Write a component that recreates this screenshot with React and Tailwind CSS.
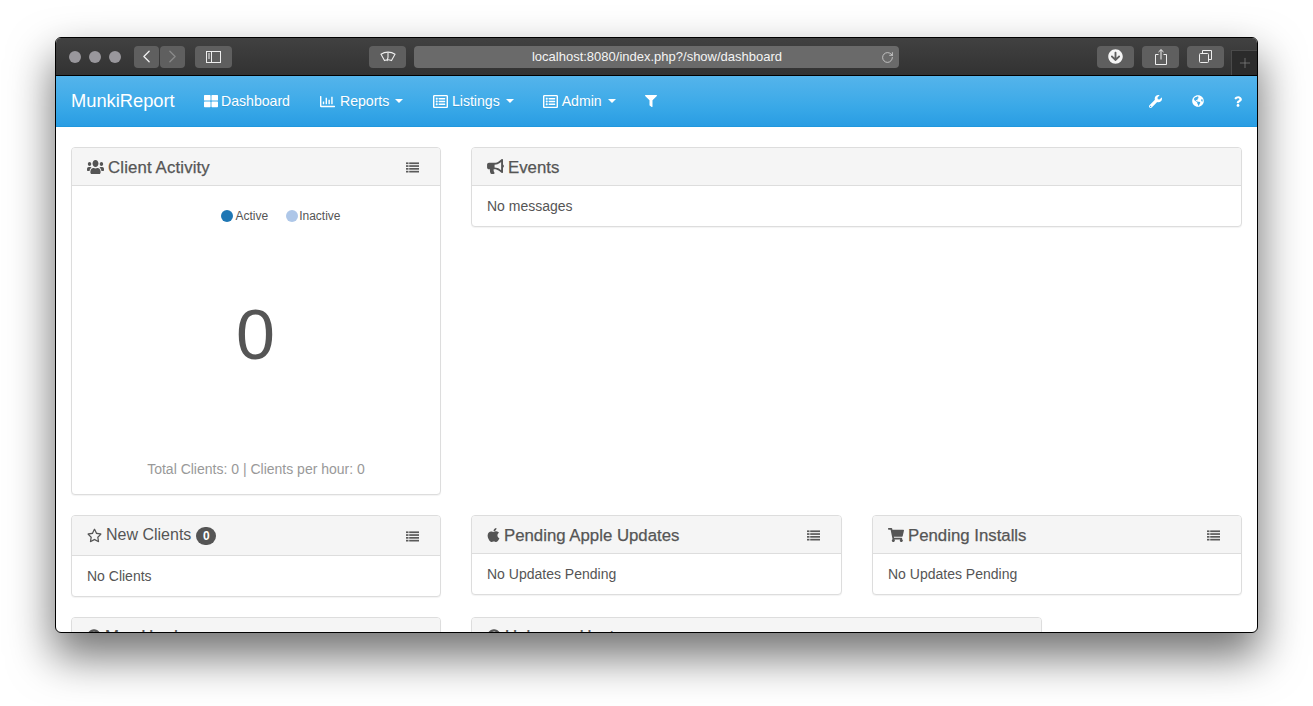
import { ChevronLeft, ChevronRight, RotateCw, Plus } from 'lucide-react';
import {
  FaThLarge, FaRegChartBar, FaRegListAlt, FaFilter, FaWrench, FaGlobeAmericas, FaQuestion,
  FaUsers, FaBullhorn, FaRegStar, FaApple, FaShoppingCart, FaArrowCircleDown, FaClock, FaQuestionCircle,
} from 'react-icons/fa';

function ListIcon() {
  return (
    <svg width="13" height="11" viewBox="0 0 13 11" fill="#5a5a5a" className="shrink-0">
      <rect x="0" y="0.4" width="2.5" height="1.7" />
      <rect x="3.2" y="0.4" width="9.8" height="1.7" />
      <rect x="0" y="3.2" width="2.5" height="1.7" />
      <rect x="3.2" y="3.2" width="9.8" height="1.7" />
      <rect x="0" y="6" width="2.5" height="1.7" />
      <rect x="3.2" y="6" width="9.8" height="1.7" />
      <rect x="0" y="8.8" width="2.5" height="1.7" />
      <rect x="3.2" y="8.8" width="9.8" height="1.7" />
    </svg>
  );
}

function ToolButton({ className = '', children }) {
  return (
    <div className={`h-[22px] rounded-[4px] bg-[#5f5f5f] flex items-center justify-center shrink-0 ${className}`}>
      {children}
    </div>
  );
}

function TitleBar() {
  return (
    <div className="h-[38px] bg-gradient-to-b from-[#414141] to-[#323232] border-b border-black flex items-center pl-[13px] pr-[1px] shrink-0 relative">
      <div className="flex gap-2 shrink-0">
        <span className="w-3 h-3 rounded-full bg-[#99979c]" />
        <span className="w-3 h-3 rounded-full bg-[#99979c]" />
        <span className="w-3 h-3 rounded-full bg-[#99979c]" />
      </div>
      <div className="flex gap-px ml-[13px]">
        <ToolButton className="w-[25px]"><ChevronLeft size={21} strokeWidth={1.5} color="#f0f0f0" /></ToolButton>
        <ToolButton className="w-[25px]"><ChevronRight size={21} strokeWidth={1.5} color="#8a8a8a" /></ToolButton>
      </div>
      <ToolButton className="w-[37px] ml-[10px]">
        <svg width="15" height="12" viewBox="0 0 15 12" fill="none" stroke="#eee">
          <rect x="0.5" y="0.5" width="14" height="11" />
          <path d="M5.5 0.5v11M2 3h2M2 5h2M2 7h2" />
        </svg>
      </ToolButton>
      <ToolButton className="w-[37px] ml-[137px]">
        <svg width="16" height="11" viewBox="0 0 16 11" fill="none" stroke="#eee" strokeWidth="1.1">
          <path d="M1 3.2C5 .4 11 .4 15 3.2L11.5 9.5C9.5 8.6 6.5 8.6 4.5 9.5Z" />
          <path d="M8 1.5V6.5L7 10" />
        </svg>
      </ToolButton>
      <div className="w-[485px] h-[22px] ml-[8px] rounded-[4px] bg-[#6a6a6a] flex items-center relative shrink-0">
        <span className="flex-1 text-center text-[13px] text-[#f4f4f4] pl-[1px] pt-[1px]">localhost:8080/index.php?/show/dashboard</span>
        <RotateCw size={13} strokeWidth={1.3} color="#e4e4e4" className="absolute right-[5px] top-[5px]" />
      </div>
      <ToolButton className="w-[37px] ml-[198px]"><FaArrowCircleDown size={15} color="#f4f4f4" /></ToolButton>
      <ToolButton className="w-[37px] ml-[8px]">
        <svg width="12" height="16" viewBox="0 0 12 16" fill="none" stroke="#eee">
          <path d="M3.5 5.5H.5v10h11v-10H8.5M6 10.5V.8M3.5 3L6 .6 8.5 3" />
        </svg>
      </ToolButton>
      <ToolButton className="w-[37px] ml-[8px]">
        <svg width="13" height="13" viewBox="0 0 13 13" fill="none" stroke="#eee">
          <rect x="0.5" y="3.5" width="9" height="9" rx="1" />
          <path d="M3.5 3.5V.5h9v9h-3" />
        </svg>
      </ToolButton>
      <div className="absolute right-0 bottom-0 w-[26px] h-[25px] bg-[#2b2b2b] border-l border-t border-[#4a4a4a] flex items-center justify-center">
        <Plus size={16} strokeWidth={1} color="#8c8c8c" />
      </div>
    </div>
  );
}

function NavItem({ icon, label, caret, wide }) {
  return (
    <a className={`flex items-center pl-[15px] h-full text-white text-[14.1px] [text-shadow:0_1px_0_rgba(0,0,0,0.1)] ${wide ? 'pr-[14.6px]' : caret ? 'pr-[14px]' : 'pr-[15px]'}`}>
      {icon}
      {label && <span className={`pt-[1px] ${wide ? 'ml-[5px]' : 'ml-[4px]'}`}>{label}</span>}
      {caret && <span className="ml-[6px] w-0 h-0 border-x-4 border-t-4 border-x-transparent border-t-white" />}
    </a>
  );
}

function NavBar() {
  return (
    <nav className="h-[51px] shrink-0 bg-gradient-to-b from-[#54b4eb] via-[#3aa9e8] via-60% to-[#299de3] border-b border-[#1f97dd] flex items-stretch">
      <a className="flex items-center pl-[15px] text-white text-[18.3px] w-[133px] whitespace-nowrap">MunkiReport</a>
      <NavItem icon={<FaThLarge size={14} className="-mr-px" />} label="Dashboard" />
      <NavItem icon={<FaRegChartBar size={15} />} label="Reports" caret wide />
      <NavItem icon={<FaRegListAlt size={15} />} label="Listings" caret />
      <NavItem icon={<FaRegListAlt size={15} />} label="Admin" caret />
      <NavItem icon={<FaFilter size={12} />} />
      <div className="ml-auto flex items-stretch">
        <NavItem icon={<FaWrench size={13} />} />
        <NavItem icon={<FaGlobeAmericas size={12} />} />
        <NavItem icon={<FaQuestion className="w-2 h-[11px]" />} />
      </div>
    </nav>
  );
}

function Panel({ icon, title, titleClass = '', strong = true, badge, list = true, headH = 'h-[38px]', className = '', bodyClass = 'px-[15px] py-[10px]', children }) {
  return (
    <div className={`bg-white border border-[#ddd] rounded-[4px] shadow-[0_1px_1px_rgba(0,0,0,0.05)] flex flex-col ${className}`}>
      <div className={`${headH} bg-[#f5f5f5] border-b border-[#ddd] rounded-t-[3px] flex items-center px-[15px] shrink-0`}>
        <span className="flex items-center text-[#555]">
          {icon}
          <span className={`ml-[4px] ${titleClass} ${strong ? 'text-[16.8px] pt-[2px] [-webkit-text-stroke:0.25px_#555]' : 'text-[16px] pb-[1px]'}`}>{title}</span>
          {badge && <span className="ml-[5px] w-[20px] h-[18px] rounded-full bg-[#555] text-white text-[12px] font-bold flex items-center justify-center">{badge}</span>}
        </span>
        {list && <span className="ml-auto mr-[6px] pt-[1px]"><ListIcon /></span>}
      </div>
      {children && <div className={`${bodyClass} text-[14px] leading-5 text-[#555]`}>{children}</div>}
    </div>
  );
}

export default function App() {
  return (
    <div className="w-[1313px] h-[706px] bg-white overflow-hidden pt-[37px] pl-[55px] font-['Liberation_Sans',Arial,sans-serif]">
      <div className="w-[1203px] h-[596px] border border-black rounded-[6px] overflow-hidden flex flex-col bg-white shadow-[0_22px_44px_2px_rgba(0,0,0,0.55)]">
        <TitleBar />
        <NavBar />
        <main className="flex-1 overflow-hidden px-[15px] pt-[20px] flex flex-col gap-[20px]">
          <div className="flex gap-[30px] items-start shrink-0">
            <Panel icon={<FaUsers className="w-[17px] h-[16px]" preserveAspectRatio="none" color="#555" />} title="Client Activity" titleClass="tracking-[0.14px]" className="w-[370px] h-[348px]" bodyClass="flex-1 flex flex-col px-[15px] pt-[22px] pb-[15px]">
              <div className="flex justify-center text-[12px] leading-4 pl-[50px]">
                <span className="flex items-center"><span className="w-3 h-3 rounded-full bg-[#1f77b4] mr-[2px]" />Active</span>
                <span className="flex items-center ml-[18px]"><span className="w-3 h-3 rounded-full bg-[#aec7e8] mr-[1px]" />Inactive</span>
              </div>
              <div className="flex-1 flex items-center justify-center text-[70px] leading-none pb-[14px] pr-[1px]">0</div>
              <div className="text-center text-[#999]">Total Clients: 0 | Clients per hour: 0</div>
            </Panel>
            <Panel icon={<FaBullhorn className="w-[17px] h-[15px]" color="#555" />} title="Events" list={false} className="flex-1">
              No messages
            </Panel>
          </div>
          <div className="flex gap-[30px] items-start shrink-0">
            <Panel icon={<FaRegStar size={15} color="#555" />} title="New Clients" strong={false} badge="0" headH="h-[40px]" className="w-[370px]">
              No Clients
            </Panel>
            <Panel icon={<FaApple className="w-[13px] h-[16px]" color="#555" />} title="Pending Apple Updates" className="w-[371px]">
              No Updates Pending
            </Panel>
            <Panel icon={<FaShoppingCart size={16} color="#555" />} title="Pending Installs" className="w-[370px]">
              No Updates Pending
            </Panel>
          </div>
          <div className="flex gap-[30px] items-start shrink-0">
            <Panel icon={<FaClock size={14} color="#555" />} title="Mac Hardware" list={false} headH="h-[36px]" className="w-[370px]" />
            <Panel icon={<FaQuestionCircle size={14} color="#555" />} title="Unknown Hosts" list={false} headH="h-[36px]" className="w-[571px]" />
          </div>
        </main>
      </div>
    </div>
  );
}
